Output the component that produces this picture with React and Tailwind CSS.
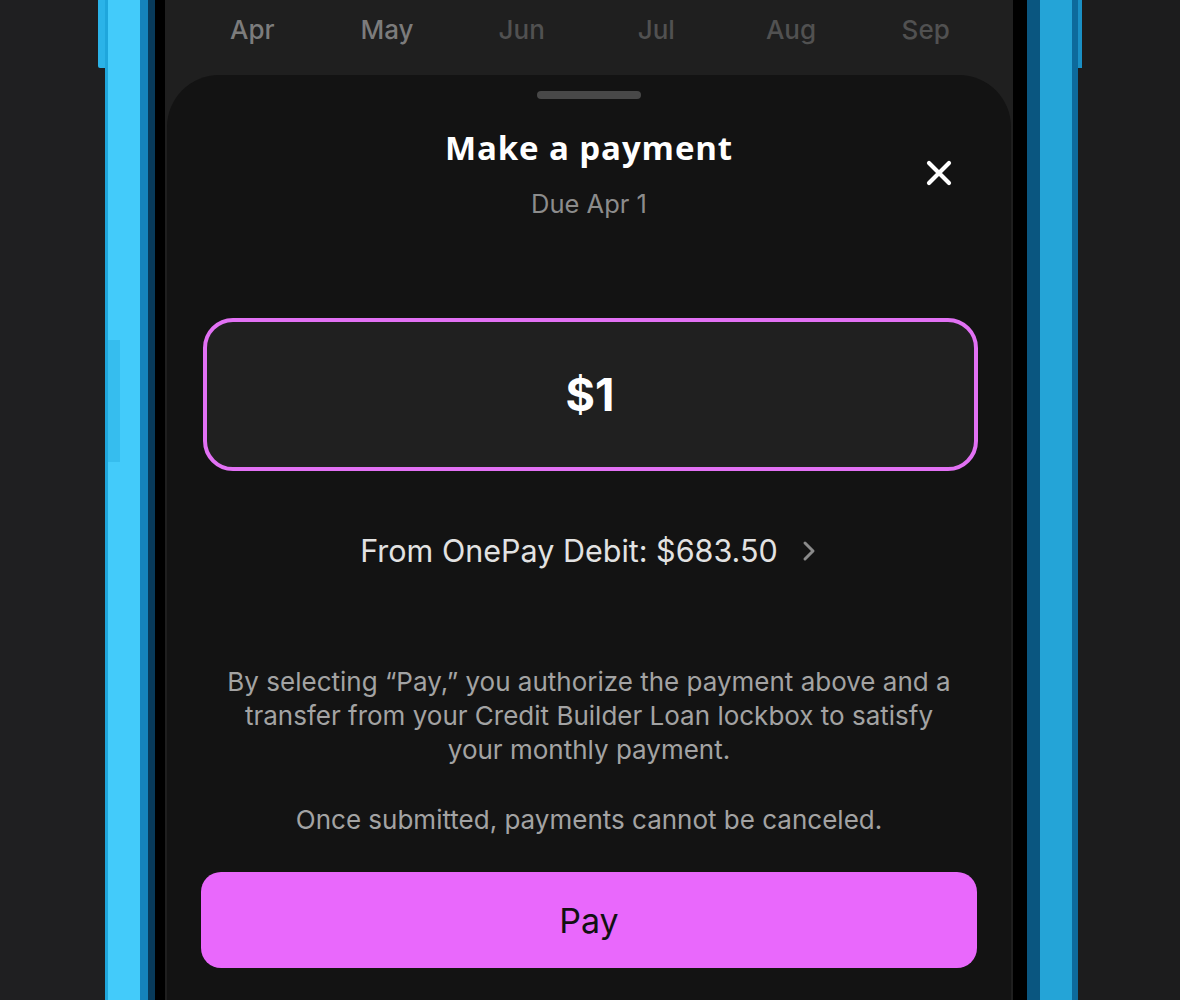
import React from 'react';

const months = [
  { label: 'Apr', active: true },
  { label: 'May', active: true },
  { label: 'Jun', active: false },
  { label: 'Jul', active: false },
  { label: 'Aug', active: false },
  { label: 'Sep', active: false },
];

function CloseIcon() {
  return (
    <svg width="28" height="28" viewBox="0 0 28 28" fill="none">
      <path d="M4 4L24 24M24 4L4 24" stroke="white" strokeWidth="4.2" strokeLinecap="round" />
    </svg>
  );
}

function Chevron() {
  return (
    <svg width="18" height="22" viewBox="0 0 18 22" fill="none">
      <path d="M5 3L13 11L5 19" stroke="#8a8a8a" strokeWidth="3" strokeLinecap="round" strokeLinejoin="round" />
    </svg>
  );
}

function PaymentSheet() {
  return (
    <div className="relative flex-1 mx-[2px] bg-[#131313] rounded-t-[52px] flex flex-col items-center px-9">
      {/* drag handle */}
      <div className="mt-4 w-[104px] h-2 rounded-full bg-[#484848]" />

      <h2
        className="mt-[29px] text-[33px] leading-[40px] font-bold text-white tracking-[0.9px]"
        style={{ fontFamily: '"Open Sans", Lato, sans-serif' }}
      >
        Make a payment
      </h2>
      <p className="mt-[21px] text-[25.5px] leading-[30px] text-[#8c8c8c]">Due Apr 1</p>

      <button className="absolute right-[58px] top-[84px]">
        <CloseIcon />
      </button>

      <div className="mt-[99px] w-[calc(100%+3px)] translate-x-[1px] h-[153px] rounded-[30px] border-[4.5px] border-[#e271f4] bg-[#202020] flex items-center justify-center">
        <span className="text-[45px] font-bold text-white leading-none">$1</span>
      </div>

      <div className="mt-[62px] flex items-center gap-[22px] h-9">
        <span className="text-[30.5px] leading-9 text-[#e2e2e2]">From OnePay Debit: $683.50</span>
        <Chevron />
      </div>

      <p className="mt-24 text-center text-[26px] leading-[34px] text-[#a3a3a3]">
        By selecting “Pay,” you authorize the payment above and a<br />
        transfer from your Credit Builder Loan lockbox to satisfy<br />
        your monthly payment.
      </p>
      <p className="mt-9 text-center text-[26px] leading-[34px] text-[#a3a3a3]">
        Once submitted, payments cannot be canceled.
      </p>

      <button className="mt-[35px] w-[calc(100%+4px)] h-24 rounded-[20px] bg-[#e968fc] text-[34px] text-[#111] flex items-center justify-center">
        Pay
      </button>
    </div>
  );
}

export default function App() {
  return (
    <div
      className="flex h-[1000px] w-[1180px] overflow-hidden bg-[#1f1f21]"
      style={{ fontFamily: 'Inter, "Noto Sans", sans-serif' }}
    >
      {/* left gutter with side button */}
      <div className="w-[105px] flex justify-end">
        <div className="w-[7px] h-[68px] bg-[#2bb3e8] rounded-bl-[2px]" />
      </div>

      {/* left frame */}
      <div className="w-[3px] bg-[#1fa6dc]" />
      <div className="w-[32px] bg-[#43cbfa] flex flex-col">
        <div className="h-[340px]" />
        <div className="w-[12px] h-[122px] bg-[#36bdee]" />
      </div>
      <div className="w-[8px] bg-[#1583bb]" />
      <div className="w-[7px] bg-[#083a5a]" />
      <div className="w-[10px] bg-black" />

      {/* screen */}
      <div className="w-[848px] bg-[#1f1f1f] flex flex-col">
        <div className="h-[75px] px-[20px] grid grid-cols-6 items-start pt-[13px]">
          {months.map((m) => (
            <span
              key={m.label}
              className={`text-center text-[26px] leading-[34px] font-medium ${m.active ? 'text-[#7c7c7c]' : 'text-[#515151]'}`}
            >
              {m.label}
            </span>
          ))}
        </div>
        <PaymentSheet />
      </div>

      {/* right frame */}
      <div className="w-[14px] bg-black" />
      <div className="w-[13px] bg-[#0a5680]" />
      <div className="w-[32px] bg-[#24a4d7]" />
      <div className="w-[6px] bg-[#0d6a9c]" />

      {/* right gutter with side button */}
      <div className="flex-1 bg-[#1c1c1d] flex">
        <div className="w-[4px] h-[68px] bg-[#1a8fc4]" />
      </div>
    </div>
  );
}
